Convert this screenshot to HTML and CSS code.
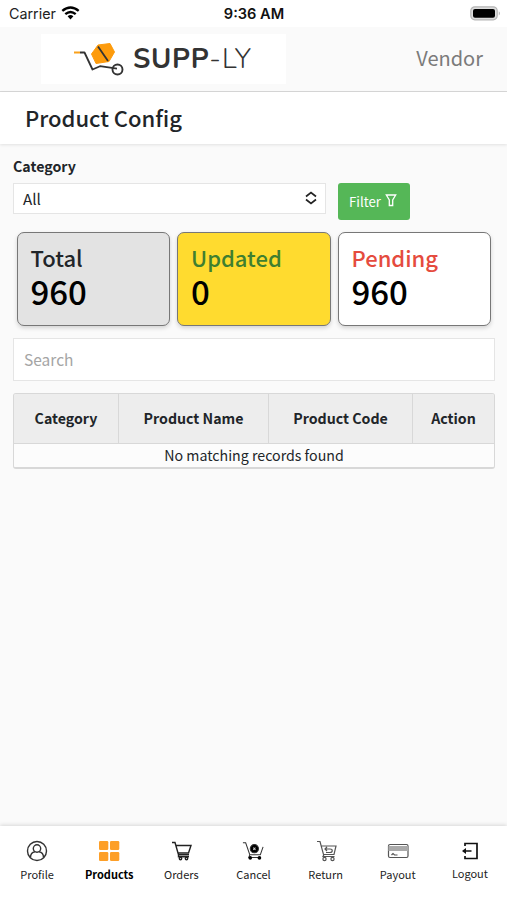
FILE: index.html
```html
<!DOCTYPE html>
<html lang="en">
<head>
<meta charset="utf-8">
<title>Product Config</title>
<link rel="stylesheet" href="styles.css">
</head>
<body>
<div class="status">
  <div class="carrier"><span>Carrier</span>
    <svg class="wifi" viewBox="0 0 19 14"><path d="M9.5 13.4 6.6 10.3Q9.5 7.900 12.400 10.300Z" fill="#000"/><path d="M4.300 8.100Q9.500 3.700 14.700 8.100M1.300 4.900Q9.500-2 17.700 4.900" fill="none" stroke="#000" stroke-width="2.400"/></svg>
  </div>
  <div class="time">9:36 AM</div>
  <svg class="battery" viewBox="0 0 31 15"><rect x=".8" y=".8" width="26.400" height="13" rx="4" fill="#ddd" stroke="#b5b5b5" stroke-width="1.200"/><rect x="3" y="3" width="22" height="8.800" rx="2" fill="#000"/><path d="M28.800 5.200q2 2.100 0 4.200z" fill="#aaa"/></svg>
</div>
<header class="topbar">
  <div class="brand">
    <svg class="logo" viewBox="0 0 51 34"><path d="M1 10.500h6" stroke="#f9a01b" stroke-width="2"/><path d="m18.500 12 6.500-9 12-1.500 4.500 8.500-5.500 9.500-13 2z" fill="#fd9b0c" stroke="#fd9b0c" stroke-width="1" stroke-linejoin="round"/><path d="M7 10.500h4.500l8 17 7.500-3.300 17 2.500M25 4.500l10 14.500" fill="none" stroke="#333" stroke-width="1.800" stroke-linejoin="round"/><circle cx="44.500" cy="27.500" r="5" fill="none" stroke="#333" stroke-width="1.900"/></svg>
    <span class="brand-name"><b>SUPP</b><i>-LY</i></span>
  </div>
  <span class="vendor">Vendor</span>
</header>
<h1 class="title"><span>Product Config</span></h1>
<main>
  <label class="field-label"><span>Category</span></label>
  <div class="filters">
    <div class="select"><span>All</span><svg viewBox="0 0 12 14"><path d="m1 5.500 5-4 5 4M1 8.500l5 4 5-4" fill="none" stroke="#222" stroke-width="1.700"/></svg></div>
    <button class="filter"><span>Filter</span><svg viewBox="0 0 11 13"><path d="M.8 1h9.400L7.200 6v5.500H3.800V6z" fill="none" stroke="#fff" stroke-width="1.300"/></svg></button>
  </div>
  <section class="stats">
    <div class="stat total"><span class="name">Total</span><span class="num">960</span></div>
    <div class="stat updated"><span class="name">Updated</span><span class="num">0</span></div>
    <div class="stat pending"><span class="name">Pending</span><span class="num">960</span></div>
  </section>
  <div class="search"><span>Search</span></div>
  <div class="table">
    <div class="row head"><div><span>Category</span></div><div><span>Product Name</span></div><div><span>Product Code</span></div><div><span>Action</span></div></div>
    <div class="empty"><span>No matching records found</span></div>
  </div>
</main>
<nav class="tabs">
  <a><svg viewBox="0 0 22 22" fill="none" stroke="#333" stroke-width="1.400"><circle cx="11" cy="11" r="9.500"/><circle cx="11" cy="8.500" r="3.700"/><path d="M4.500 17.500c0-3.600 2-5.300 4.500-5.700M17.500 17.500c0-3.600-2-5.300-4.500-5.700"/></svg><span>Profile</span></a>
  <a class="active"><svg viewBox="0 0 22 22" fill="#fd9f28"><rect x="1" y="1" width="9.300" height="9" rx="1.300"/><rect x="12" y="1" width="9.300" height="9" rx="1.300"/><rect x="1" y="12" width="9.300" height="9" rx="1.300"/><rect x="12" y="12" width="9.300" height="9" rx="1.300"/></svg><span>Products</span></a>
  <a><svg viewBox="0 0 22 22" fill="none" stroke="#222" stroke-width="1.400"><path d="M2 2.500h3l3.500 12.300h10.500M6 5.500h15l-2.500 7.500H8.500M8.500 14.800v2h10.500"/><circle cx="10.500" cy="18.500" r="1.200"/><circle cx="16.500" cy="18.500" r="1.200"/></svg><span>Orders</span></a>
  <a><svg viewBox="0 0 24 22" fill="none" stroke="#333" stroke-width="1.100"><path d="M1 2h3l4.500 13H20l3-8.500M8.500 15l-1 3h13"/><circle cx="13.500" cy="8.500" r="4.500" fill="#000"/><path d="m12.300 7.300 2.400 2.400m0-2.400-2.400 2.400" stroke="#ccc"/><circle cx="9" cy="18.500" r="2" fill="#000" stroke="none"/><circle cx="19" cy="18.500" r="2" fill="#000" stroke="none"/></svg><span>Cancel</span></a>
  <a><svg viewBox="0 0 22 22" fill="none" stroke="#555" stroke-width="1.200"><path d="M2 1.500h3l3.500 13h10.500l2-8.500H6.500M9 14.500l-1 2h11.500M12 7l-2 2 2 2M10 9h5c3 0 3 3.500 0 3.500h-4"/><circle cx="9.500" cy="19" r="1.600"/><circle cx="17.500" cy="19" r="1.600"/></svg><span>Return</span></a>
  <a><svg viewBox="0 0 22 22" fill="none" stroke="#555" stroke-width="1.200"><rect x="1.500" y="4.500" width="19.500" height="13" rx="1.500"/><path d="M2 6.500h18.500v4H2z" fill="#aaa" stroke="#aaa"/><path d="M4.500 15l1.500-1.500 1.500 1.500h3"/></svg><span>Payout</span></a>
  <a class="logout"><svg viewBox="0 0 22 22" fill="none" stroke="#111" stroke-width="1.700"><path d="M6 6V3.500h12v15H6V16M4.500 11h8"/><path d="m3 11 4-3v6z" fill="#111" stroke="none"/></svg><span>Logout</span></a>
</nav>
</body>
</html>
```
FILE: styles.css
```css
* { box-sizing: border-box; }
body { margin: 0; height: 900px; display: flex; flex-direction: column; overflow: hidden; background: #fafafa; color: #212529; font: 16px/20px "Noto Sans CJK JP", "Noto Sans", sans-serif; }
svg { display: block; flex: none; }
span { white-space: nowrap; }
.status { height: 27px; flex: none; display: grid; grid-template-columns: 1fr 1fr 1fr; align-items: center; padding: 0 6px 0 9px; background: #fff; font-family: Inter, sans-serif; color: #222; font-size: 14.300px; }
.carrier { display: flex; align-items: center; gap: 5px; }
.wifi { width: 19px; height: 14px; margin-top: -2px; }
.time { padding-right: 2px; text-align: center; font-weight: 600; font-size: 14.600px; color: #111; }
.battery { width: 31px; height: 15px; justify-self: end; }
.topbar { height: 65px; flex: none; display: flex; justify-content: space-between; align-items: center; padding: 0 24px 0 41px; border-bottom: 1px solid #d8d8d8; }
.brand { display: flex; align-items: center; width: 245px; height: 50px; padding-left: 32px; background: #fff; }
.logo { width: 51px; height: 34px; margin-top: -1px; }
.brand-name { margin-left: 9px; font: 27.500px/34px "Nunito", Inter, sans-serif; color: #333; letter-spacing: 1.150px; }
.brand-name b { font-weight: 700; letter-spacing: .7px; }
.brand-name i { font-style: normal; font-weight: 350; }
.vendor { margin-top: -2px; font-size: 20px; color: #7b7b7b; }
.title { height: 52px; flex: none; display: flex; align-items: center; margin: 0; padding: 0 0 2px 25px; background: #fff; font-size: 22px; font-weight: 500; box-shadow: 0 1px 3px rgba(0,0,0,.1); }
main { flex: 1; padding: 13px 12px 0 13px; }
.field-label { display: block; height: 20px; font-size: 14.200px; font-weight: 700; line-height: 19px; }
.filters { display: flex; align-items: flex-start; gap: 12px; margin-top: 6px; }
.select { width: 313px; height: 31px; display: flex; align-items: center; justify-content: space-between; padding: 0 8px 1px 9px; border: 1px solid #e5e5e5; background: #fff; font-size: 15.200px; }
.select svg { width: 12px; height: 14px; }
.filter { width: 72px; height: 37px; display: flex; align-items: center; justify-content: center; gap: 4px; padding: 0 2px 0 0; border: 0; border-radius: 3px; background: #55b757; color: #fff; font: 13.200px/20px "Noto Sans CJK JP", sans-serif; }
.filter svg { width: 12px; height: 13px; margin-top: -3px; }
.stats { display: grid; grid-template-columns: repeat(3, 153.500px); gap: 7px; margin: 12px 0 0 3.500px; }
.stat { height: 94px; display: flex; flex-direction: column; padding: 8px 13px; border: 1.500px solid #777; border-radius: 7px; box-shadow: 0 2px 4px rgba(0,0,0,.16); font-weight: 500; }
.name { font-size: 22px; line-height: 32px; }
.num { font-size: 33px; line-height: 36px; color: #000; }
.total { background: #e3e3e3; }
.updated { background: #ffdb2f; }
.updated .name { color: #3f7f30; }
.pending { background: #fff; }
.pending .name { color: #e54b3e; }
.search { height: 43px; display: flex; align-items: center; margin-top: 12px; padding: 0 0 2px 10px; border: 1px solid #e5e5e5; background: #fff; color: #a5a5a5; font-size: 15.500px; }
.table { margin-top: 12px; border: 1px solid #d8d8d8; border-bottom-width: 2px; border-radius: 3px; overflow: hidden; }
.row { display: grid; grid-template-columns: 105px 150px 144px 1fr; height: 50px; background: #ededed; border-bottom: 1px solid #d8d8d8; font-weight: 700; font-size: 14.200px; }
.row div { display: flex; align-items: center; justify-content: center; padding-bottom: 1px; border-right: 1px solid #d8d8d8; }
.row div:last-child { border-right: 0; }
.empty { height: 23px; text-align: center; line-height: 23px; font-size: 14.200px; background: #fcfcfc; }
.tabs { height: 74px; flex: none; display: grid; grid-template-columns: repeat(7, 1fr); padding: 0 1px; background: #fff; box-shadow: 0 -1px 4px rgba(0,0,0,.14); font-size: 11px; color: #222; }
.tabs a { display: flex; flex-direction: column; align-items: center; padding-top: 14px; gap: 2px; }
.tabs svg { width: 22px; height: 22px; }
.tabs .active { font-weight: 700; color: #000; }
.logout span { margin-top: -1px; }
```
